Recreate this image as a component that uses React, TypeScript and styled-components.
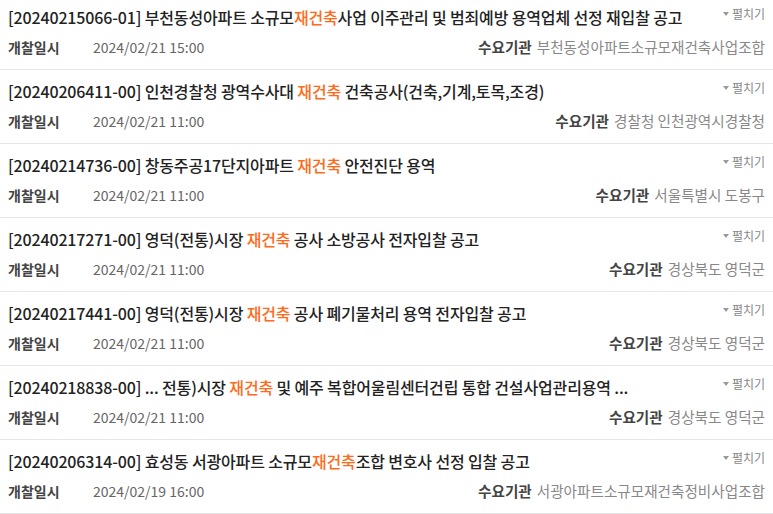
import { createGlobalStyle, styled } from "styled-components";

const GlobalStyle = createGlobalStyle`
  html, body {
    margin: 0;
    padding: 0;
    background: #fff;
  }
  body {
    font-family: "Noto Sans CJK KR", "Noto Sans", sans-serif;
    color: #222;
    overflow: hidden;
  }
`;

const List = styled.ul`
  list-style: none;
  margin: -4px 0 0;
  padding: 0;
`;

const Item = styled.li`
  padding: 10px 8px 11px;
  border-bottom: 1px solid #e6e6e6;
  display: flex;
  flex-direction: column;
  gap: 8px;
`;

const TopLine = styled.div`
  display: flex;
  justify-content: space-between;
  align-items: flex-start;
`;

const Title = styled.div`
  font-size: 16px;
  line-height: 22px;
  font-weight: 500;
  color: #222;
  white-space: nowrap;
  overflow: hidden;
  letter-spacing: -0.15px;
`;

const Keyword = styled.span`
  color: #ff6a1a;
`;

const Toggle = styled.button`
  flex: none;
  display: flex;
  align-items: center;
  gap: 3px;
  margin-top: -1px;
  padding: 0;
  border: 0;
  background: none;
  font-family: inherit;
  font-size: 12px;
  line-height: 18px;
  color: #888;
  cursor: pointer;
  &::before {
    content: "";
    border-left: 3.5px solid transparent;
    border-right: 3.5px solid transparent;
    border-top: 4px solid #999;
  }
`;

const MetaLine = styled.div`
  display: flex;
  justify-content: space-between;
  align-items: center;
  font-size: 14px;
  line-height: 22px;
`;

const DateGroup = styled.div`
  display: flex;
`;

const Label = styled.span<{ $width?: number }>`
  font-weight: 700;
  color: #444;
  width: ${(p) => (p.$width ? `${p.$width}px` : "auto")};
`;

const DateText = styled.span`
  color: #666;
`;

const Agency = styled.div`
  display: flex;
  gap: 5px;
  font-size: 14.6px;
`;

const AgencyName = styled.span`
  color: #888;
`;

type Bid = {
  no: string;
  before: string;
  after: string;
  date: string;
  agency: string;
};

const bids: Bid[] = [
  {
    no: "20240215066-01",
    before: "부천동성아파트 소규모",
    after: "사업 이주관리 및 범죄예방 용역업체 선정 재입찰 공고",
    date: "2024/02/21 15:00",
    agency: "부천동성아파트소규모재건축사업조합",
  },
  {
    no: "20240206411-00",
    before: "인천경찰청 광역수사대 ",
    after: " 건축공사(건축,기계,토목,조경)",
    date: "2024/02/21 11:00",
    agency: "경찰청 인천광역시경찰청",
  },
  {
    no: "20240214736-00",
    before: "창동주공17단지아파트 ",
    after: " 안전진단 용역",
    date: "2024/02/21 11:00",
    agency: "서울특별시 도봉구",
  },
  {
    no: "20240217271-00",
    before: "영덕(전통)시장 ",
    after: " 공사 소방공사 전자입찰 공고",
    date: "2024/02/21 11:00",
    agency: "경상북도 영덕군",
  },
  {
    no: "20240217441-00",
    before: "영덕(전통)시장 ",
    after: " 공사 폐기물처리 용역 전자입찰 공고",
    date: "2024/02/21 11:00",
    agency: "경상북도 영덕군",
  },
  {
    no: "20240218838-00",
    before: "... 전통)시장 ",
    after: " 및 예주 복합어울림센터건립 통합 건설사업관리용역 ...",
    date: "2024/02/21 11:00",
    agency: "경상북도 영덕군",
  },
  {
    no: "20240206314-00",
    before: "효성동 서광아파트 소규모",
    after: "조합 변호사 선정 입찰 공고",
    date: "2024/02/19 16:00",
    agency: "서광아파트소규모재건축정비사업조합",
  },
];

export default function App() {
  return (
    <>
      <GlobalStyle />
      <List>
        {bids.map((bid) => (
          <Item key={bid.no}>
            <TopLine>
              <Title>
                [{bid.no}] {bid.before}
                <Keyword>재건축</Keyword>
                {bid.after}
              </Title>
              <Toggle type="button">펼치기</Toggle>
            </TopLine>
            <MetaLine>
              <DateGroup>
                <Label $width={85}>개찰일시</Label>
                <DateText>{bid.date}</DateText>
              </DateGroup>
              <Agency>
                <Label>수요기관</Label>
                <AgencyName>{bid.agency}</AgencyName>
              </Agency>
            </MetaLine>
          </Item>
        ))}
      </List>
    </>
  );
}
